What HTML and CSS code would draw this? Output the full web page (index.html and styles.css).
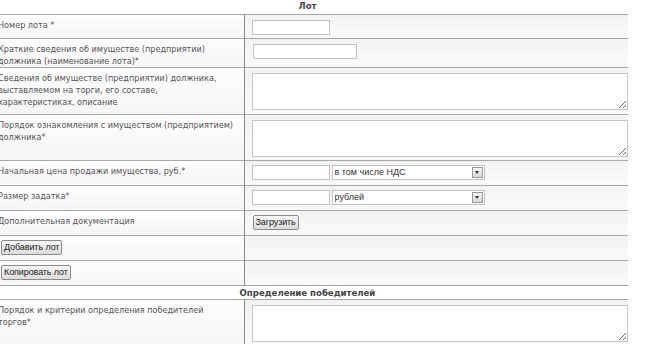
FILE: index.html
```html
<!DOCTYPE html>
<html>
<head>
<meta charset="utf-8">
<link rel="stylesheet" href="styles.css">
</head>
<body>
<table class="form">
  <colgroup><col class="c1"><col class="c2"></colgroup>
  <tr class="head"><td colspan="2">Лот</td></tr>
  <tr class="r24"><td class="lbl">Номер лота *</td><td class="fld"><input class="inp w78" type="text"></td></tr>
  <tr class="r27"><td class="lbl">Краткие сведения об имуществе (предприятии) должника (наименование лота)*</td><td class="fld"><input class="inp w103" type="text"></td></tr>
  <tr class="r47"><td class="lbl">Сведения об имуществе (предприятии) должника, выставляемом на торги, его составе, характеристиках, описание</td><td class="fld"><textarea class="ta"></textarea></td></tr>
  <tr class="r46"><td class="lbl">Порядок ознакомления с имуществом (предприятием) должника*</td><td class="fld"><textarea class="ta"></textarea></td></tr>
  <tr class="r25"><td class="lbl">Начальная цена продажи имущества, руб.*</td><td class="fld"><div class="pair"><input class="inp w78" type="text"><span class="sel"><select><option>в том числе НДС</option></select><span class="arrow"></span></span></div></td></tr>
  <tr class="r25"><td class="lbl">Размер задатка*</td><td class="fld"><div class="pair"><input class="inp w78" type="text"><span class="sel"><select><option>рублей</option></select><span class="arrow"></span></span></div></td></tr>
  <tr class="r25"><td class="lbl">Дополнительная документация</td><td class="fld"><button class="btn">Загрузить</button></td></tr>
  <tr class="r25"><td class="lbl btncell"><button class="btn">Добавить лот</button></td><td class="fld"></td></tr>
  <tr class="r25"><td class="lbl btncell"><button class="btn">Копировать лот</button></td><td class="fld"></td></tr>
  <tr class="head sub"><td colspan="2">Определение победителей</td></tr>
  <tr class="r47"><td class="lbl">Порядок и критерии определения победителей торгов*</td><td class="fld"><textarea class="ta"></textarea></td></tr>
</table>
</body>
</html>
```

FILE: styles.css
```css
html, body {
  margin: 0;
  padding: 0;
  background: #fff;
  overflow: hidden;
}
body {
  font-family: "DejaVu Sans Condensed", "DejaVu Sans", sans-serif;
  font-size: 9px;
  color: #555;
}
.form {
  border-collapse: collapse;
  margin-left: -13px;
  width: 641px;
  table-layout: fixed;
}
.c1 { width: 257px; }
.form td {
  padding: 0;
  vertical-align: top;
  box-sizing: border-box;
}
.head td {
  text-align: center;
  font-family: "DejaVu Sans Condensed", "DejaVu Sans", sans-serif;
  font-weight: bold;
  font-size: 9.5px;
  line-height: 11px;
  background: #fff;
  color: #444;
}
.head { height: 14px; }
.head.sub { height: 14px; }
.head.sub td {
  border-top: 1px solid #a8a8a8;
  line-height: 13px;
}
.lbl {
  border-top: 1px solid #a8a8a8;
  border-right: 1px solid #8a8a8a;
  padding: 4px 9px 0 11px !important;
  line-height: 12px;
  background: linear-gradient(to bottom, #fdfdfd, #f5f5f5);
}
.fld {
  border-top: 1px solid #a8a8a8;
  padding: 4px 0 0 7px !important;
  background: linear-gradient(to bottom, #f2f2f2, #fafafa);
}
.form tr:last-child td { border-bottom: 1px solid #a8a8a8; }
.r24 { height: 24px; }
.r27 { height: 27px; }
.r47 { height: 47px; }
.r46 { height: 46px; }
.r25 { height: 25px; }
.r24 .fld { padding-top: 5px !important; }
.r27 .fld { padding-top: 5px !important; }
.inp {
  display: block;
  box-sizing: border-box;
  height: 15px;
  border: 1px solid #c2c2c2;
  background: #fff;
  margin: 0;
  padding: 0;
}
.w78 { width: 78px; }
.w103 { width: 104px; margin-left: 1px; }
.ta {
  display: block;
  box-sizing: border-box;
  width: 376px;
  height: 37px;
  border: 1px solid #c6c6c6;
  background: #fff;
  margin: 1px 0 0;
  padding: 0;
  resize: vertical;
}
.pair {
  display: flex;
  gap: 2px;
  align-items: center;
}
.sel {
  position: relative;
  display: block;
  width: 153px;
  height: 15px;
}
.sel select {
  appearance: none;
  -webkit-appearance: none;
  box-sizing: border-box;
  width: 153px;
  height: 15px;
  border: 1px solid #c2c2c2;
  background: #fff;
  font-family: "Liberation Sans", Arial, sans-serif;
  font-size: 9px;
  color: #333;
  padding: 0 0 0 2px;
  margin: 0;
}
.arrow {
  position: absolute;
  right: 2px;
  top: 2px;
  width: 9px;
  height: 9px;
  border: 1px solid #9a9a9a;
  background: linear-gradient(#f4f4f4, #d8d8d8);
}
.arrow::after {
  content: "";
  position: absolute;
  left: 2px;
  top: 3px;
  border-left: 2.5px solid transparent;
  border-right: 2.5px solid transparent;
  border-top: 3px solid #333;
}
.btn {
  font-family: "Liberation Sans", Arial, sans-serif;
  font-size: 9px;
  letter-spacing: -0.1px;
  color: #222;
  height: 15px;
  line-height: 11px;
  padding: 0 2px;
  margin: 0 0 0 1px;
  border: 1px solid #8a8a8a;
  border-radius: 2px;
  background: linear-gradient(#f6f6f6, #dcdcdc);
}
.btncell { padding-left: 13px !important; padding-top: 4px !important; }
```
